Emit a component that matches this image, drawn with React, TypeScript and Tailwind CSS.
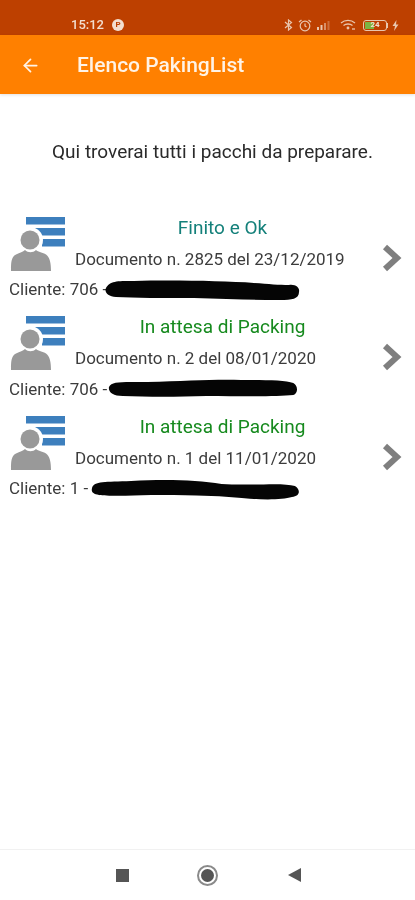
import { ArrowLeft } from "lucide-react";

const rows = [
  {
    status: "Finito e Ok",
    color: "text-[#14807a]",
    doc: "Documento n. 2825 del 23/12/2019",
    client: "Cliente: 706 -",
    blob: "M2 9 C6 2 12 2 30 2 C70 1 120 2 150 4 C165 5 175 6 185 6 C192 5 196 9 195 13 C195 20 188 21 176 21 C150 21 120 20 90 19 C60 19 30 19 12 18 C4 18 0 13 2 9 Z",
    blobW: "w-[210px]",
    gap: "ml-[-3px]",
  },
  {
    status: "In attesa di Packing",
    color: "text-[#168a1e]",
    doc: "Documento n. 2 del 08/01/2020",
    client: "Cliente: 706 -",
    blob: "M1 9 C4 3 14 4 40 4 C80 3 110 1 135 2 C160 2 180 2 188 5 C193 8 193 15 188 17 C170 19 130 18 100 18 C70 19 40 19 15 18 C5 18 0 14 1 9 Z",
    blobW: "w-[207px]",
    gap: "ml-[1px]",
  },
  {
    status: "In attesa di Packing",
    color: "text-[#168a1e]",
    doc: "Documento n. 1 del 11/01/2020",
    client: "Cliente: 1 -",
    blob: "M1 10 C3 3 14 4 40 3 C75 1 105 2 130 6 C160 8 190 4 203 8 C209 12 208 18 200 19 C190 22 170 22 150 20 C120 17 90 17 60 17 C35 18 15 18 8 17 C2 16 0 14 1 10 Z",
    blobW: "w-[211px]",
    gap: "ml-[3px]",
  },
];

const PersonListIcon = () => (
  <svg width="56" height="55" viewBox="0 0 56 55" className="shrink-0">
    <rect x="16" y="0" width="39" height="7.5" fill="#3d7fbd" />
    <rect x="24" y="11" width="31" height="7.5" fill="#3d7fbd" />
    <rect x="32" y="22" width="23" height="7.5" fill="#3d7fbd" />
    <circle cx="20" cy="23" r="13" fill="#ffffff" />
    <circle cx="20" cy="23" r="9.5" fill="#999999" />
    <path d="M1 54 C1 46 1 40 6 37.5 C10 35.5 13 35 15 33 C18 36 23 36 26 33 C28 35 33 35.5 36 37.5 C40 40 41 47 41 54 Z" fill="#999999" />
  </svg>
);

const Chevron = () => (
  <svg width="20" height="28" viewBox="0 0 20 28" className="shrink-0">
    <path d="M3 3 L15 14 L3 25" fill="none" stroke="#7f7f7f" strokeWidth="6" strokeLinejoin="miter" />
  </svg>
);

const StatusIcons = () => (
  <div className="flex items-center gap-[5px] text-[#e9c6ae]">
    <svg width="9" height="12" viewBox="0 0 9 12" fill="none" stroke="currentColor" strokeWidth="1.2">
      <path d="M1 3 L7.5 8.5 L4.5 11 L4.5 1 L7.5 3.5 L1 9" />
    </svg>
    <svg width="14" height="13" viewBox="0 0 14 13" fill="none" stroke="currentColor" strokeWidth="1.2">
      <circle cx="7" cy="7" r="4.8" />
      <path d="M7 4.5 V7 L8.5 8 M1 3 L3.5 1 M13 3 L10.5 1" />
    </svg>
    <svg width="16" height="10" viewBox="0 0 16 10" fill="currentColor">
      <rect x="0" y="7" width="2" height="3" />
      <rect x="3.5" y="5" width="2" height="5" />
      <rect x="7" y="3" width="2" height="7" opacity="0.6" />
      <rect x="10.5" y="1" width="2" height="9" opacity="0.35" />
    </svg>
    <svg width="16" height="12" viewBox="0 0 16 12" fill="none" stroke="currentColor" strokeWidth="1.3" className="ml-[2px]">
      <path d="M1 4 C5 0.5 11 0.5 15 4 M3.5 6.5 C6 4.5 10 4.5 12.5 6.5" />
      <circle cx="8" cy="9" r="0.8" fill="currentColor" />
      <path d="M12 10 H15" />
    </svg>
    <div className="flex items-center ml-[2px]">
      <div className="flex h-[11px] w-[24px] items-center rounded-[3px] border border-[#e9c6ae] p-[1px]">
        <div className="flex h-full w-[9px] items-center bg-[#7cb342]" />
        <span className="ml-[-3px] text-[8px] leading-none font-bold text-[#f3dfcf]">24</span>
      </div>
      <div className="h-[5px] w-[1.5px] bg-[#e9c6ae]" />
    </div>
    <svg width="7" height="11" viewBox="0 0 7 11" fill="currentColor" className="ml-[-1px]">
      <path d="M4.5 0 L0.5 6 H3 L2 11 L6.5 4.5 H4 Z" />
    </svg>
  </div>
);

export default function App() {
  return (
    <div className="flex h-[900px] w-[415px] flex-col overflow-hidden bg-white font-['Roboto',sans-serif] blur-[0.6px]">
      <div className="flex h-[35px] items-center justify-between bg-[#bd4000] pl-[71px] pr-[16px] pt-[15px]">
        <div className="flex items-center gap-[8px]">
          <span className="text-[13px] font-medium text-[#f3dfcf]">15:12</span>
          <div className="flex h-[12px] w-[12px] items-center justify-center rounded-full bg-[#f3dfcf] text-[8px] font-bold text-[#bd4000]">P</div>
        </div>
        <StatusIcons />
      </div>

      <div className="flex h-[59px] items-center bg-[#ff8000] pl-[20px] pt-[2px] shadow-[0_1px_3px_rgba(0,0,0,0.12)]">
        <ArrowLeft size={21} strokeWidth={2} className="text-[#fff3e6]" />
        <span className="ml-[36px] text-[21px] font-medium text-[#fff3e6]">Elenco PakingList</span>
      </div>

      <div className="flex-1">
        <p className="pl-[10px] pt-[46px] pb-[53px] text-center text-[19px] leading-[24px] text-[#2a2a2a]">
          Qui troverai tutti i pacchi da preparare.
        </p>

        <div className="flex flex-col">
          {rows.map((row) => (
            <div key={row.doc} className="h-[99.3px] pl-[10px] pr-[13px]">
              <div className="flex items-start">
                <PersonListIcon />
                <div className="flex-1 pl-[9px]">
                  <div className={`pr-[12px] text-center text-[19px] leading-[22px] ${row.color}`}>{row.status}</div>
                  <div className="mt-[9px] text-[17px] leading-[22px] whitespace-nowrap text-[#3c3c3c]">{row.doc}</div>
                </div>
                <div className="mt-[27px]">
                  <Chevron />
                </div>
              </div>
              <div className="ml-[-1px] mt-[7px] flex h-[22px] items-center text-[17px] text-[#3c3c3c]">
                <span className="shrink-0">{row.client}</span>
                <svg viewBox="0 0 210 22" preserveAspectRatio="none" className={`h-[22px] shrink-0 ${row.blobW} ${row.gap}`}>
                  <path d={row.blob} fill="#050505" />
                </svg>
              </div>
            </div>
          ))}
        </div>
      </div>

      <div className="flex h-[51px] items-center border-t border-[#f1f1f1] pl-[116px]">
        <div className="h-[13px] w-[13px] bg-[#555555]" />
        <div className="ml-[68px] flex h-[21px] w-[21px] items-center justify-center rounded-full border-2 border-[#8a8a8a]">
          <div className="h-[13px] w-[13px] rounded-full bg-[#555555]" />
        </div>
        <svg width="13" height="14" viewBox="0 0 13 14" className="ml-[70px]">
          <path d="M13 0 V14 L0 7 Z" fill="#555555" />
        </svg>
      </div>
    </div>
  );
}
